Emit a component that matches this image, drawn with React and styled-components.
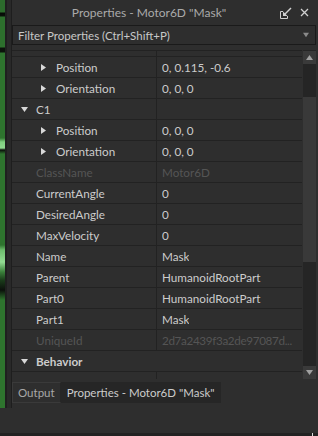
import React from 'react';
import styled, { createGlobalStyle } from 'styled-components';

const GlobalStyle = createGlobalStyle`
  html, body {
    margin: 0;
    padding: 0;
    background: #2e2e2e;
  }
  body {
    font-family: Lato, "Open Sans", sans-serif;
  }
  * {
    box-sizing: border-box;
  }
`;

const Screen = styled.div`
  width: 318px;
  height: 436px;
  display: flex;
  flex-direction: column;
  background: #2e2e2e;
  overflow: hidden;
`;

const Workspace = styled.div`
  display: flex;
  height: 408px;
`;

const Viewport = styled.div`
  width: 5px;
  background: linear-gradient(
    to bottom,
    #2c6b2c 0px, #2c6b2c 12px, #050805 13px, #0a120a 16px, #2d702d 17px,
    #2d702d 47px, #0b130b 48px, #0b130b 52px, #2e742e 53px,
    #2e742e 138px, #7fcf7f 142px, #8fd88f 148px, #0a0f0a 150px, #2e742e 154px,
    #2e742e 245px, #6dbd6d 250px, #93dc93 262px, #3a803a 272px,
    #1a3d1a 280px, #0b100b 290px, #2e742e 300px, #2e742e 408px
  );
`;

const Splitter = styled.div`
  width: 2px;
  background: #1f1f1f;
`;

const Gutter = styled.div`
  width: 4px;
  background: #292929;
`;

const Dock = styled.div`
  flex: 1;
  display: flex;
  flex-direction: column;
  border-left: 1px solid #1e1e1e;
  min-width: 0;
`;

const TitleBar = styled.div`
  height: 25px;
  display: flex;
  align-items: center;
  color: #aaaaaa;
  font-size: 12px;
`;

const TitleText = styled.div`
  flex: 1;
  text-align: center;
  padding-left: 6px;
`;

const TitleIcons = styled.div`
  width: 38px;
  display: flex;
  align-items: center;
  gap: 8px;
`;

const FilterBox = styled.div`
  height: 20px;
  margin-right: 2px;
  border: 1px solid #1a1a1a;
  display: flex;
  align-items: center;
  padding: 0 6px 0 5px;
  color: #c8c8c8;
  font-size: 11.5px;
`;

const FilterText = styled.span`
  flex: 1;
`;

const TableArea = styled.div`
  margin-top: 5px;
  height: 329px;
  display: flex;
  margin-right: 2px;
`;

const Grid = styled.div`
  flex: 1;
  border-top: 1px solid #222222;
  overflow: hidden;
`;

const Rows = styled.div`
  margin-top: -15px;
`;

const Row = styled.div`
  height: 21px;
  display: flex;
  border-bottom: 1px solid #222222;
  font-size: 11.7px;
  color: ${p => (p.$dim ? '#555555' : '#cccccc')};
  font-weight: ${p => (p.$bold ? 700 : 400)};
`;

const NameCell = styled.div`
  width: ${p => (p.$wide ? 'auto' : '145px')};
  flex: ${p => (p.$wide ? 1 : 'none')};
  display: flex;
  align-items: center;
  padding-left: ${p => p.$indent}px;
  border-right: ${p => (p.$wide ? 'none' : '1px solid #222222')};
  white-space: nowrap;
`;

const Arrow = styled.span`
  width: ${p => (p.$nested ? 16 : 15)}px;
  display: flex;
  align-items: center;
`;

const ValueCell = styled.div`
  flex: 1;
  min-width: 0;
  display: flex;
  align-items: center;
  padding: 0 2px 0 5px;
  white-space: nowrap;
  overflow: hidden;
`;

const ValueText = styled.span`
  overflow: hidden;
  text-overflow: ellipsis;
  letter-spacing: ${p => (p.$tight ? '-0.35px' : 'normal')};
`;

const Scrollbar = styled.div`
  width: 13px;
  margin-left: 1px;
  display: flex;
  flex-direction: column;
  background: #252525;
  padding-top: 1px;
`;

const ScrollButton = styled.div`
  height: 13px;
  background: #3a3a3a;
  display: flex;
  align-items: center;
  justify-content: center;
`;

const Track = styled.div`
  flex: 1;
  padding-top: 33px;
  padding-bottom: 104px;
  display: flex;
`;

const Thumb = styled.div`
  flex: 1;
  background: #393939;
`;

const Tabs = styled.div`
  margin-top: 3px;
  height: 21px;
  display: flex;
  font-size: 11.5px;
`;

const Tab = styled.div`
  display: flex;
  align-items: center;
  padding: 0 ${p => (p.$active ? 6 : 5)}px;
  color: ${p => (p.$active ? '#cccccc' : '#a8a8a8')};
  background: ${p => (p.$active ? '#262626' : '#2e2e2e')};
  border: ${p => (p.$active ? 'none' : '1px solid #3a3a3a')};
  border-right: ${p => (p.$active ? 'none' : '1px solid #262626')};
`;

const BottomBar = styled.div`
  flex: 1;
  border-bottom: 3px solid #222222;
  display: flex;
  justify-content: flex-end;
  align-items: flex-end;
`;

const Tick = styled.div`
  width: 1px;
  height: 3px;
  margin-right: 5px;
  margin-bottom: -3px;
  background: #dddddd;
`;

const Tri = ({ dir, color = '#d8d8d8', size = 7 }) => {
  const pts = {
    right: '1,0 6,3.5 1,7',
    down: '0,1 7,1 3.5,6',
    up: '0,6 7,6 3.5,1',
  }[dir];
  return (
    <svg width={size} height={size} viewBox="0 0 7 7">
      <polygon points={pts} fill={color} />
    </svg>
  );
};

const UndockIcon = () => (
  <svg width="12" height="12" viewBox="0 0 12 12">
    <path d="M0.5 4.5 V11.5 H7.5 V9 M0.5 4.5 H3" stroke="#d0d0d0" strokeWidth="1" fill="none" />
    <path d="M11 1 L4.5 7.5" stroke="#d0d0d0" strokeWidth="1.4" fill="none" />
    <polygon points="3,4.5 3,9 7.5,9" fill="#d0d0d0" />
  </svg>
);

const CloseIcon = () => (
  <svg width="9" height="9" viewBox="0 0 9 9">
    <path d="M1 1 L8 8 M8 1 L1 8" stroke="#d0d0d0" strokeWidth="1.3" />
  </svg>
);

const rows = [
  { name: '', value: '' },
  { name: 'Position', value: '0, 0.115, -0.6', nested: true },
  { name: 'Orientation', value: '0, 0, 0', nested: true },
  { name: 'C1', group: true, open: true },
  { name: 'Position', value: '0, 0, 0', nested: true },
  { name: 'Orientation', value: '0, 0, 0', nested: true },
  { name: 'ClassName', value: 'Motor6D', dim: true },
  { name: 'CurrentAngle', value: '0' },
  { name: 'DesiredAngle', value: '0' },
  { name: 'MaxVelocity', value: '0' },
  { name: 'Name', value: 'Mask' },
  { name: 'Parent', value: 'HumanoidRootPart' },
  { name: 'Part0', value: 'HumanoidRootPart' },
  { name: 'Part1', value: 'Mask' },
  { name: 'UniqueId', value: '2d7a2439f3a2de97087d...', dim: true, tight: true },
  { name: 'Behavior', category: true },
  { name: '', value: '' },
];

const PropRow = ({ row }) => {
  if (row.category) {
    return (
      <Row $bold>
        <NameCell $wide $indent={9}>
          <Arrow><Tri dir="down" /></Arrow>
          {row.name}
        </NameCell>
      </Row>
    );
  }
  if (row.group) {
    return (
      <Row>
        <NameCell $indent={9}>
          <Arrow><Tri dir="down" /></Arrow>
          {row.name}
        </NameCell>
        <ValueCell />
      </Row>
    );
  }
  return (
    <Row $dim={row.dim}>
      <NameCell $indent={row.nested ? 28 : 24}>
        {row.nested && <Arrow $nested><Tri dir="right" /></Arrow>}
        {row.name}
      </NameCell>
      <ValueCell><ValueText $tight={row.tight}>{row.value}</ValueText></ValueCell>
    </Row>
  );
};

export default function App() {
  return (
    <Screen>
      <GlobalStyle />
      <Workspace>
        <Viewport />
        <Splitter />
        <Gutter />
        <Dock>
          <TitleBar>
            <TitleText>Properties - Motor6D "Mask"</TitleText>
            <TitleIcons>
              <UndockIcon />
              <CloseIcon />
            </TitleIcons>
          </TitleBar>
          <FilterBox>
            <FilterText>Filter Properties (Ctrl+Shift+P)</FilterText>
            <Tri dir="down" color="#8a8a8a" size={6} />
          </FilterBox>
          <TableArea>
            <Grid>
              <Rows>
                {rows.map((r, i) => <PropRow key={i} row={r} />)}
              </Rows>
            </Grid>
            <Scrollbar>
              <ScrollButton><Tri dir="up" color="#a0a0a0" /></ScrollButton>
              <Track><Thumb /></Track>
              <ScrollButton><Tri dir="down" color="#a0a0a0" /></ScrollButton>
            </Scrollbar>
          </TableArea>
          <Tabs>
            <Tab>Output</Tab>
            <Tab $active>Properties - Motor6D "Mask"</Tab>
          </Tabs>
        </Dock>
      </Workspace>
      <BottomBar>
        <Tick />
      </BottomBar>
    </Screen>
  );
}
